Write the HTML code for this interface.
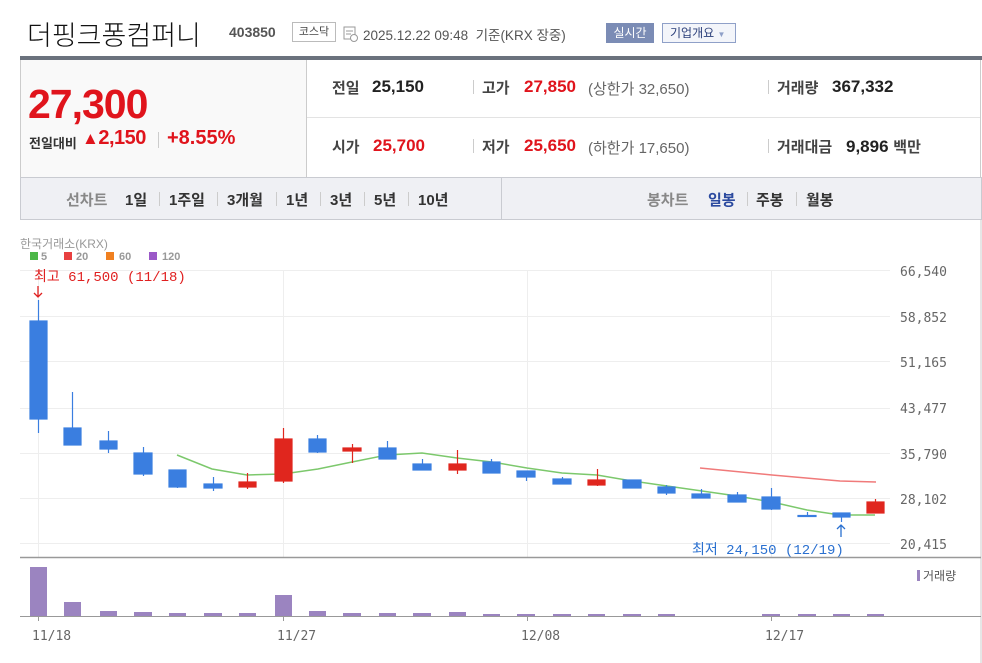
<!DOCTYPE html>
<html><head><meta charset="utf-8"><style>
*{margin:0;padding:0;box-sizing:border-box}
body{width:982px;height:663px;background:#fff;font-family:"Liberation Sans","Noto Sans CJK KR",sans-serif;position:relative;overflow:hidden;color:#333}
.a{position:absolute;white-space:nowrap}
.lbl{font-size:15px;color:#444;font-weight:bold}
.val{font-size:17px;font-weight:bold;color:#222}
.red{color:#e0141c}
.sep{position:absolute;width:1px;background:#ccc}
.sub{font-size:15px;color:#666}
.tab{font-size:15px;font-weight:bold;color:#333;top:189px}
</style></head><body>
<div class="a" style="left:27px;top:14px;font-size:27px;color:#111;font-family:'Noto Sans CJK KR',sans-serif;font-weight:300">더핑크퐁컴퍼니</div>
<div class="a" style="left:229px;top:24px;font-size:14px;font-weight:bold;color:#555">403850</div>
<div class="a" style="left:292px;top:22px;width:44px;height:20px;border:1px solid #bbb;font-size:11px;color:#444;text-align:center;line-height:18px">코스닥</div>
<svg class="a" style="left:343px;top:26px" width="16" height="16"><rect x="1" y="1" width="11" height="12" fill="none" stroke="#999"/><line x1="3" y1="5" x2="10" y2="5" stroke="#999"/><line x1="3" y1="8" x2="8" y2="8" stroke="#999"/><circle cx="11" cy="12" r="3.5" fill="#fff" stroke="#999"/></svg>
<div class="a" style="left:363px;top:24px;font-size:13.5px;color:#555">2025.12.22 09:48 &nbsp;기준(KRX 장중)</div>
<div class="a" style="left:606px;top:23px;width:48px;height:20px;background:#7b8cb5;color:#fff;font-size:12px;text-align:center;line-height:20px">실시간</div>
<div class="a" style="left:662px;top:23px;width:74px;height:20px;border:1px solid #8fa0c8;background:#f3f5fa;color:#2b3f7a;font-size:12px;line-height:18px;padding-left:7px">기업개요 <span style="font-size:8px;color:#8fa0c8">▼</span></div>

<div class="a" style="left:20px;top:56px;width:962px;height:4px;background:#6b727d"></div>
<div class="a" style="left:20px;top:60px;width:287px;height:118px;background:#f9f9f9;border-right:1px solid #ccc;border-left:1px solid #ccc"></div>
<div class="a" style="left:307px;top:117px;width:674px;height:1px;background:#e3e3e3"></div>
<div class="a" style="left:980px;top:60px;width:1px;height:160px;background:#ccc"></div>
<div class="a red" style="left:28px;top:81px;font-size:41px;font-weight:bold;letter-spacing:-1px">27,300</div>
<div class="a" style="left:29px;top:133px;font-size:13px;color:#333;font-weight:bold">전일대비</div>
<div class="a red" style="left:82px;top:127px;font-size:20px;font-weight:bold;letter-spacing:-0.5px"><span style="font-size:17px">▲</span>2,150</div>
<div class="sep" style="left:158px;top:132px;height:16px"></div>
<div class="a red" style="left:167px;top:127px;font-size:20px;font-weight:bold">+8.55%</div>

<div class="a lbl" style="left:332px;top:77px">전일</div><div class="a val" style="left:372px;top:77px">25,150</div>
<div class="sep" style="left:473px;top:80px;height:14px"></div>
<div class="a lbl" style="left:482px;top:77px">고가</div><div class="a val red" style="left:524px;top:77px">27,850</div><div class="a sub" style="left:588px;top:78px">(상한가 32,650)</div>
<div class="sep" style="left:768px;top:80px;height:14px"></div>
<div class="a lbl" style="left:777px;top:77px">거래량</div><div class="a val" style="left:832px;top:77px">367,332</div>
<div class="a lbl" style="left:332px;top:136px">시가</div><div class="a val red" style="left:373px;top:136px">25,700</div>
<div class="sep" style="left:473px;top:139px;height:14px"></div>
<div class="a lbl" style="left:482px;top:136px">저가</div><div class="a val red" style="left:524px;top:136px">25,650</div><div class="a sub" style="left:588px;top:137px">(하한가 17,650)</div>
<div class="sep" style="left:768px;top:139px;height:14px"></div>
<div class="a lbl" style="left:777px;top:136px">거래대금</div><div class="a val" style="left:846px;top:136px">9,896 <span style="font-size:15px;color:#444">백만</span></div>

<div class="a" style="left:20px;top:177px;width:962px;height:43px;background:#eff0f4;border:1px solid #c9cbd1"></div>
<div class="a" style="left:501px;top:178px;width:1px;height:41px;background:#c9cbd1"></div>
<div class="a tab" style="left:66px;color:#888">선차트</div>
<div class="a tab" style="left:125px">1일</div><div class="sep" style="left:159px;top:192px;height:14px"></div>
<div class="a tab" style="left:169px">1주일</div><div class="sep" style="left:217px;top:192px;height:14px"></div>
<div class="a tab" style="left:227px">3개월</div><div class="sep" style="left:276px;top:192px;height:14px"></div>
<div class="a tab" style="left:286px">1년</div><div class="sep" style="left:320px;top:192px;height:14px"></div>
<div class="a tab" style="left:330px">3년</div><div class="sep" style="left:364px;top:192px;height:14px"></div>
<div class="a tab" style="left:374px">5년</div><div class="sep" style="left:408px;top:192px;height:14px"></div>
<div class="a tab" style="left:418px">10년</div>
<div class="a tab" style="left:647px;color:#888">봉차트</div>
<div class="a tab" style="left:708px;color:#2b4a9f">일봉</div><div class="sep" style="left:747px;top:192px;height:14px"></div>
<div class="a tab" style="left:756px">주봉</div><div class="sep" style="left:796px;top:192px;height:14px"></div>
<div class="a tab" style="left:806px">월봉</div>

<svg class="a" style="left:0;top:220px" width="982" height="443" viewBox="0 220 982 443" font-family="'DejaVu Sans Mono','Liberation Mono',monospace">
<line x1="981" y1="220" x2="981" y2="663" stroke="#ccc"/>
<g stroke="#eee" stroke-width="1">
<line x1="20" y1="270.5" x2="890" y2="270.5"/><line x1="20" y1="316.5" x2="890" y2="316.5"/><line x1="20" y1="361.5" x2="890" y2="361.5"/><line x1="20" y1="408.5" x2="890" y2="408.5"/><line x1="20" y1="453.5" x2="890" y2="453.5"/><line x1="20" y1="498.5" x2="890" y2="498.5"/><line x1="20" y1="543.5" x2="890" y2="543.5"/>
<line x1="38.5" y1="270" x2="38.5" y2="557"/><line x1="283.5" y1="270" x2="283.5" y2="557"/><line x1="527.5" y1="270" x2="527.5" y2="557"/><line x1="771.5" y1="270" x2="771.5" y2="557"/>
</g>
<g font-size="13" fill="#666">
<text x="900" y="276">66,540</text><text x="900" y="322">58,852</text><text x="900" y="367">51,165</text><text x="900" y="413">43,477</text><text x="900" y="459">35,790</text><text x="900" y="504">28,102</text><text x="900" y="549">20,415</text>
</g>
<text x="20" y="248" font-size="12" fill="#999" font-family="'Liberation Sans','Noto Sans CJK KR',sans-serif">한국거래소(KRX)</text>
<g font-size="11" font-weight="bold" fill="#999" font-family="'Liberation Sans',sans-serif">
<rect x="30" y="252" width="8" height="8" fill="#4cb748"/><text x="41" y="260">5</text>
<rect x="64" y="252" width="8" height="8" fill="#e84040"/><text x="76" y="260">20</text>
<rect x="106" y="252" width="8" height="8" fill="#f08020"/><text x="119" y="260">60</text>
<rect x="149" y="252" width="8" height="8" fill="#9b59c8"/><text x="162" y="260">120</text>
</g>
<text x="34" y="281" font-size="14" fill="#e02020" font-family="'Liberation Mono','Noto Sans CJK KR',monospace">최고 61,500 (11/18)</text>
<path d="M38 286 V297 M34 293 L38 297 L42 293" stroke="#e02020" fill="none" stroke-width="1.3"/>
<text x="692" y="554" font-size="14" fill="#2a70d0" font-family="'Liberation Mono','Noto Sans CJK KR',monospace">최저 24,150 (12/19)</text>
<path d="M841 537 V525 M837 529 L841 525 L845 529" stroke="#2a70d0" fill="none" stroke-width="1.3"/>
<polyline fill="none" stroke="#7cc86c" stroke-width="1.5" points="177,455 212,469 247,475 283,474 318,469 352,462 387,455 422,453 457,458 492,462 527,468 562,473 597,475 632,481 667,486 702,491 737,496 772,502 807,510 840,515 875,515"/>
<polyline fill="none" stroke="#f07a7a" stroke-width="1.5" points="700,468 772,475 840,481 876,482"/>
<g stroke-width="1.2">
<g fill="#3a7ee0" stroke="#3a7ee0">
<line x1="38.5" y1="300" x2="38.5" y2="433"/><rect x="30" y="321" width="17" height="98"/>
<line x1="72.5" y1="392" x2="72.5" y2="445"/><rect x="64" y="428" width="17" height="17"/>
<line x1="108.5" y1="431" x2="108.5" y2="453"/><rect x="100" y="441" width="17" height="8"/>
<line x1="143.5" y1="447" x2="143.5" y2="476"/><rect x="134" y="453" width="18" height="21"/>
<line x1="177.5" y1="470" x2="177.5" y2="488"/><rect x="169" y="470" width="17" height="17"/>
<line x1="213.5" y1="477" x2="213.5" y2="491"/><rect x="204" y="484" width="18" height="4"/>
<line x1="317.5" y1="435" x2="317.5" y2="453"/><rect x="309" y="439" width="17" height="13"/>
<line x1="387.5" y1="441" x2="387.5" y2="459"/><rect x="379" y="448" width="17" height="11"/>
<line x1="422.5" y1="459" x2="422.5" y2="470"/><rect x="413" y="464" width="18" height="6"/>
<line x1="491.5" y1="459" x2="491.5" y2="473"/><rect x="483" y="462" width="17" height="11"/>
<line x1="526.5" y1="471" x2="526.5" y2="481"/><rect x="517" y="471" width="18" height="6"/>
<line x1="562.5" y1="477" x2="562.5" y2="484"/><rect x="553" y="479" width="18" height="5"/>
<rect x="623" y="480" width="18" height="8"/>
<line x1="666.5" y1="485" x2="666.5" y2="495"/><rect x="658" y="487" width="17" height="6"/>
<line x1="701.5" y1="489" x2="701.5" y2="498"/><rect x="692" y="494" width="18" height="4"/>
<line x1="737.5" y1="492" x2="737.5" y2="502"/><rect x="728" y="495" width="18" height="7"/>
<line x1="771.5" y1="488" x2="771.5" y2="510"/><rect x="762" y="497" width="18" height="12"/>
<line x1="807.5" y1="512" x2="807.5" y2="517"/><rect x="798" y="515.5" width="18" height="1"/>
<line x1="841.5" y1="513" x2="841.5" y2="522"/><rect x="833" y="513" width="17" height="4"/>
</g>
<g fill="#e0261e" stroke="#e0261e">
<line x1="247.5" y1="473" x2="247.5" y2="489"/><rect x="239" y="482" width="17" height="5"/>
<line x1="283.5" y1="428" x2="283.5" y2="483"/><rect x="275" y="439" width="17" height="42"/>
<line x1="352.5" y1="444" x2="352.5" y2="463"/><rect x="343" y="448" width="18" height="3"/>
<line x1="457.5" y1="450" x2="457.5" y2="474"/><rect x="449" y="464" width="17" height="6"/>
<line x1="597.5" y1="469" x2="597.5" y2="486"/><rect x="588" y="480" width="17" height="5"/>
<line x1="875.5" y1="499" x2="875.5" y2="513"/><rect x="867" y="502" width="17" height="11"/>
</g>
</g>
<line x1="20" y1="557.5" x2="981" y2="557.5" stroke="#999" stroke-width="1.5"/>
<g fill="#9b84c0">
<rect x="30" y="567" width="17" height="49"/><rect x="64" y="602" width="17" height="14"/><rect x="100" y="611" width="17" height="5"/><rect x="134" y="612" width="18" height="4"/><rect x="169" y="613" width="17" height="3"/><rect x="204" y="613" width="18" height="3"/><rect x="239" y="613" width="17" height="3"/><rect x="275" y="595" width="17" height="21"/><rect x="309" y="611" width="17" height="5"/><rect x="343" y="613" width="18" height="3"/><rect x="379" y="613" width="17" height="3"/><rect x="413" y="613" width="18" height="3"/><rect x="449" y="612" width="17" height="4"/><rect x="483" y="614" width="17" height="2"/>
<rect x="517" y="614" width="18" height="2"/><rect x="553" y="614" width="18" height="2"/><rect x="588" y="614" width="17" height="2"/><rect x="623" y="614" width="18" height="2"/><rect x="658" y="614" width="17" height="2"/><rect x="762" y="614" width="18" height="2"/><rect x="798" y="614" width="18" height="2"/><rect x="833" y="614" width="17" height="2"/><rect x="867" y="614" width="17" height="2"/>
<rect x="917" y="570" width="3" height="11"/>
</g>
<text x="923" y="580" font-size="12" fill="#555" font-family="'Liberation Sans','Noto Sans CJK KR',sans-serif">거래량</text>
<line x1="20" y1="616.5" x2="981" y2="616.5" stroke="#999" stroke-width="1"/>
<g stroke="#999"><line x1="38.5" y1="616" x2="38.5" y2="621"/><line x1="283.5" y1="616" x2="283.5" y2="621"/><line x1="527.5" y1="616" x2="527.5" y2="621"/><line x1="771.5" y1="616" x2="771.5" y2="621"/></g>
<g font-size="13" fill="#666"><text x="32" y="640">11/18</text><text x="277" y="640">11/27</text><text x="521" y="640">12/08</text><text x="765" y="640">12/17</text></g>
</svg>
</body></html>
